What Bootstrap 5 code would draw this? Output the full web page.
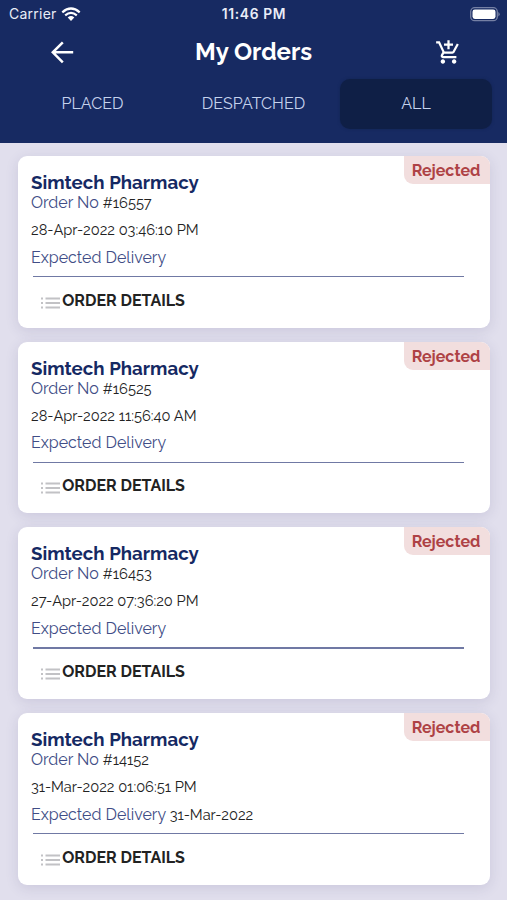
<!DOCTYPE html>
<html lang="en">
<head>
<meta charset="utf-8">
<meta name="viewport" content="width=device-width, initial-scale=1">
<title>My Orders</title>
<link href="https://cdn.jsdelivr.net/npm/bootstrap@5.3.0/dist/css/bootstrap.min.css" rel="stylesheet">
<style>
body{font-family:Raleway,Lato,sans-serif;background:#e1dfed;height:900px;overflow:hidden;color:#222;font-variant-numeric:oldstyle-nums}
.app-header{background:#172a62;height:142.5px;color:#fff}
.status-bar{font-family:Inter,sans-serif;font-variant-numeric:lining-nums;height:28px;padding:0 7px 0 9px;font-size:14px;line-height:28px;color:#e9edf7}
.status-bar>*{flex:1 1 0}
.carrier{letter-spacing:.25px}
.clock{font-size:13.8px;font-weight:600;letter-spacing:.65px;padding-right:1px}
.title-bar{height:48px;padding:0 45px 0 50px}
.page-title{font-size:24px;font-weight:700;line-height:48px;letter-spacing:-.02px;margin-right:3px}
.tabs{padding:3px 15px 0 11px}
.tab-item{flex:1 1 0;height:50px;line-height:50px;border-radius:10px;color:#c6d3ed;font-size:16px}
.tab-item.middle{margin:0 5px 0 -2px;letter-spacing:.04px}
.tab-item.active{flex:0 0 152px;background:#0f1f46;box-shadow:0 0 3px #0f1f4688}
.orders{padding:13.5px 17.5px 0 18px;gap:13.7px}
.order{height:171.9px;border:0;border-radius:9px;box-shadow:0 3px 13px rgba(70,65,120,.14);padding:15px 13px 0}
.shop{font-size:18.7px;font-weight:700;line-height:23px;color:#152963}
.lbl{font-size:16px;color:#404d86}
.val{font-size:14.65px;font-weight:450}
.ln{line-height:18px;white-space:nowrap}
.ln.placed{margin-top:9.3px}
.ln.expected{line-height:20px;margin-top:8.5px}
.rule{height:1.5px;background:#7079a4;margin:8.2px 13px 0 2px}
.details{font-size:16px;font-weight:700;line-height:20px;margin:13.4px 0 0 9px}
.details svg{margin:4px 1.5px 0 .7px}
.state{right:0;top:0;width:86px;height:28px;line-height:29px;padding-right:1px;background:#f2dede;color:#ae4245;font-size:16px;font-weight:700;border-radius:0 9px 0 9px}
</style>
<script src="https://cdn.jsdelivr.net/npm/bootstrap@5.3.0/dist/js/bootstrap.bundle.min.js"></script>
</head>
<body>
<svg class="d-none"><symbol id="list" viewBox="0 0 20 12"><path d="M0 1.5h2M4.5 1.5h14.5M0 6h2M4.5 6h14.5M0 10.5h2M4.5 10.5h14.5" stroke="#c2c2c5" stroke-width="1.8"/></symbol></svg>
<header class="app-header">
  <div class="status-bar d-flex align-items-center">
    <div class="d-flex align-items-center"><span class="carrier">Carrier</span>
      <svg class="ms-1" width="20" height="15" viewBox="0 0 20 15" fill="none" stroke="#fff" stroke-width="2.2"><path d="M1.3 5.3Q10-2.3 18.7 5.3M4.2 8.4Q10 3.4 15.8 8.4"/><path d="M6.7 10.5Q10 7.7 13.3 10.5L10 14Z" fill="#fff" stroke="none"/></svg></div>
    <div class="clock text-center">11:46 PM</div>
    <div class="d-flex justify-content-end"><svg width="30" height="15" viewBox="0 0 30 15"><rect x=".7" y=".7" width="26.6" height="13" rx="4" fill="none" stroke="#7580a4" stroke-width="1.3"/><rect x="2.5" y="2.5" width="23" height="9.4" rx="2.3" fill="#fff"/><path d="M28.3 5v4.5q1.4-.6 1.4-2.2T28.3 5" fill="#7580a4"/></svg></div>
  </div>
  <div class="title-bar d-flex align-items-center justify-content-between">
    <svg width="25" height="24" viewBox="0 0 25 24" fill="none" stroke="#fff" stroke-width="2.5"><path d="M23.2 12.3H3M12.8 2.3L2.8 12.3l10 10"/></svg>
    <h1 class="page-title mb-0">My Orders</h1>
    <svg width="27" height="27" viewBox="0 0 24 24" fill="#fff"><path d="M11 9h2V6h3V4h-3V1h-2v3H8v2h3v3zm-4 9c-1.1 0-1.99.9-1.99 2S5.9 22 7 22s2-.9 2-2-.9-2-2-2zm10 0c-1.1 0-1.99.9-1.99 2s.89 2 1.99 2 2-.9 2-2-.9-2-2-2zm-8.9-5h7.45c.75 0 1.41-.41 1.75-1.03l3.86-7.01L19.42 4l-3.87 7H8.53L4.27 2H1v2h2l3.6 7.59-1.35 2.44C4.52 15.37 5.48 17 7 17h12v-2H7l1.1-2z"/></svg>
  </div>
  <nav class="tabs d-flex text-center">
    <a class="tab-item text-decoration-none">PLACED</a>
    <a class="tab-item middle text-decoration-none">DESPATCHED</a>
    <a class="tab-item active text-decoration-none">ALL</a>
  </nav>
</header>
<main class="orders d-flex flex-column">
  <article class="card order"><span class="state position-absolute text-center">Rejected</span>
    <h2 class="shop mb-0">Simtech Pharmacy</h2>
    <div class="ln"><span class="lbl">Order No</span> <span class="val">#16557</span></div>
    <div class="ln placed val">28-Apr-2022 03:46:10 PM</div>
    <div class="ln expected"><span class="lbl">Expected Delivery</span></div>
    <div class="rule"></div>
    <div class="details d-flex align-items-center"><svg width="20" height="12"><use href="#list"/></svg><span>ORDER DETAILS</span></div>
  </article>
  <article class="card order"><span class="state position-absolute text-center">Rejected</span>
    <h2 class="shop mb-0">Simtech Pharmacy</h2>
    <div class="ln"><span class="lbl">Order No</span> <span class="val">#16525</span></div>
    <div class="ln placed val">28-Apr-2022 11:56:40 AM</div>
    <div class="ln expected"><span class="lbl">Expected Delivery</span></div>
    <div class="rule"></div>
    <div class="details d-flex align-items-center"><svg width="20" height="12"><use href="#list"/></svg><span>ORDER DETAILS</span></div>
  </article>
  <article class="card order"><span class="state position-absolute text-center">Rejected</span>
    <h2 class="shop mb-0">Simtech Pharmacy</h2>
    <div class="ln"><span class="lbl">Order No</span> <span class="val">#16453</span></div>
    <div class="ln placed val">27-Apr-2022 07:36:20 PM</div>
    <div class="ln expected"><span class="lbl">Expected Delivery</span></div>
    <div class="rule"></div>
    <div class="details d-flex align-items-center"><svg width="20" height="12"><use href="#list"/></svg><span>ORDER DETAILS</span></div>
  </article>
  <article class="card order"><span class="state position-absolute text-center">Rejected</span>
    <h2 class="shop mb-0">Simtech Pharmacy</h2>
    <div class="ln"><span class="lbl">Order No</span> <span class="val">#14152</span></div>
    <div class="ln placed val">31-Mar-2022 01:06:51 PM</div>
    <div class="ln expected"><span class="lbl">Expected Delivery</span> <span class="val">31-Mar-2022</span></div>
    <div class="rule"></div>
    <div class="details d-flex align-items-center"><svg width="20" height="12"><use href="#list"/></svg><span>ORDER DETAILS</span></div>
  </article>
</main>
</body>
</html>
